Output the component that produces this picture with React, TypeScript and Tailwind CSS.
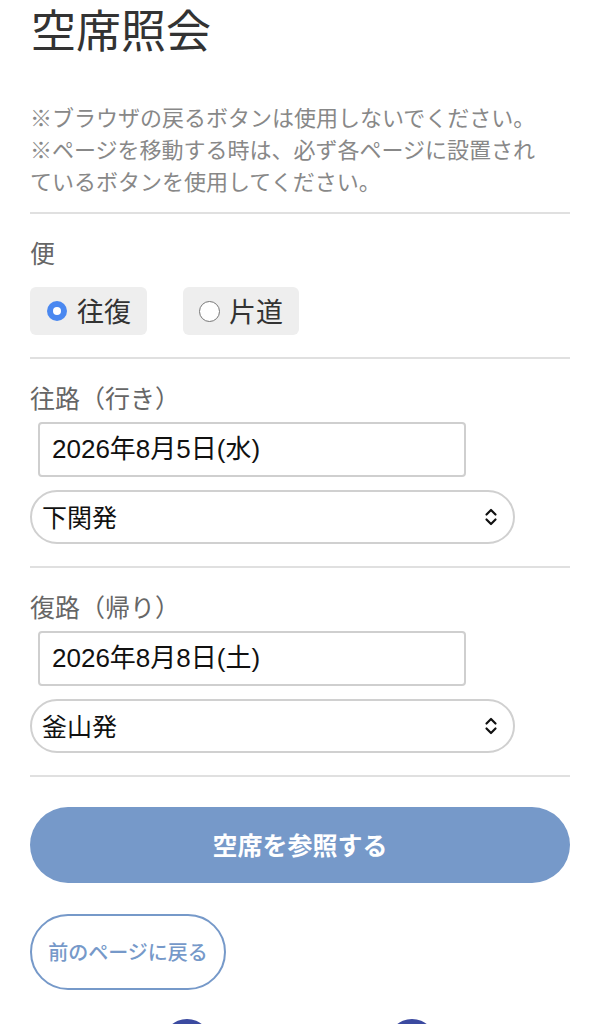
import React from 'react';

const font = { fontFamily: '"Noto Sans CJK JP", "Noto Sans", sans-serif' };
const latin = { fontFamily: '"Liberation Sans", "Noto Sans CJK JP", sans-serif' };

const Divider = () => <div className="h-[2px] bg-[#e0e0e0]" />;

const Chevrons = () => (
  <svg width="14" height="22" viewBox="0 0 14 22" fill="none" stroke="#111" strokeWidth="2.2" strokeLinecap="round" strokeLinejoin="round">
    <path d="M2.5 8.5 L7 4 L11.5 8.5" />
    <path d="M2.5 13.5 L7 18 L11.5 13.5" />
  </svg>
);

const Leg = ({ title, date, from }: { title: string; date: string; from: string }) => (
  <section className="pt-[22px] pb-[22px]">
    <h2 className="text-[25px] leading-[32px] text-[#666]">{title}</h2>
    <div
      className="mt-[9px] ml-[8px] w-[428px] h-[55px] border-2 border-[#cfcfcf] rounded-[4px] flex items-center px-[12px] text-[26px] text-[#111]"
      style={latin}
    >
      {date}
    </div>
    <div className="mt-[13px] w-[485px] h-[54px] border-2 border-[#d0d0d0] rounded-full flex items-center justify-between pl-[10px] pr-[15px] text-[25px] text-[#111]">
      <span>{from}</span>
      <Chevrons />
    </div>
  </section>
);

export default function App() {
  return (
    <div className="w-[600px] h-[1024px] overflow-hidden bg-white relative" style={font}>
      <div className="px-[30px]">
        <h1 className="pt-[5px] text-[45px] leading-[48px] text-[#333] pl-[1px]">空席照会</h1>
        <div className="mt-[47px] text-[22px] leading-[32px] text-[#888] pb-[16px]">
          <p>※ブラウザの戻るボタンは使用しないでください。</p>
          <p>
            ※ページを移動する時は、必ず各ページに設置され
            <br />
            ているボタンを使用してください。
          </p>
        </div>
        <Divider />
        <section className="pt-[22px] pb-[22px]">
          <h2 className="text-[25px] leading-[32px] text-[#666]">便</h2>
          <div className="mt-[19px] flex gap-[36px]">
            <label className="h-[48px] w-[117px] bg-[#eeeeee] rounded-[6px] flex items-center pl-[17px] gap-[10px] text-[27px] text-[#333]">
              <span className="w-[20px] h-[20px] rounded-full bg-[#4a88f0] flex items-center justify-center">
                <span className="w-[8px] h-[8px] rounded-full bg-white" />
              </span>
              往復
            </label>
            <label className="h-[48px] w-[116px] bg-[#eeeeee] rounded-[6px] flex items-center pl-[16px] gap-[9px] text-[27px] text-[#333]">
              <span className="w-[21px] h-[21px] rounded-full border-[1.5px] border-[#777] bg-white" />
              片道
            </label>
          </div>
        </section>
        <Divider />
        <Leg title="往路（行き）" date="2026年8月5日(水)" from="下関発" />
        <Divider />
        <Leg title="復路（帰り）" date="2026年8月8日(土)" from="釜山発" />
        <Divider />
        <button className="mt-[30px] w-full h-[76px] rounded-full bg-[#7699c9] text-white text-[25px] font-bold">
          空席を参照する
        </button>
        <button className="mt-[31px] w-[196px] h-[76px] rounded-full border-2 border-[#7699c9] text-[#7699c9] text-[20px] font-medium">
          前のページに戻る
        </button>
      </div>
      <div className="absolute left-[163px] top-[1019px] w-[48px] h-[48px] rounded-full bg-[#3b4aa0]" />
      <div className="absolute left-[388px] top-[1019px] w-[48px] h-[48px] rounded-full bg-[#3b4aa0]" />
    </div>
  );
}
